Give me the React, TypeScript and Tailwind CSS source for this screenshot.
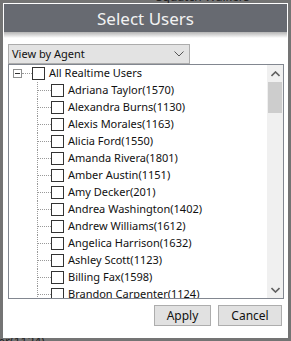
import React from "react";

const users: [string, number][] = [
  ["Adriana Taylor", 1570],
  ["Alexandra Burns", 1130],
  ["Alexis Morales", 1163],
  ["Alicia Ford", 1550],
  ["Amanda Rivera", 1801],
  ["Amber Austin", 1151],
  ["Amy Decker", 201],
  ["Andrea Washington", 1402],
  ["Andrew Williams", 1612],
  ["Angelica Harrison", 1632],
  ["Ashley Scott", 1123],
  ["Billing Fax", 1598],
  ["Brandon Carpenter", 1124],
];

const font = { fontFamily: '"Noto Sans", "Open Sans", sans-serif' };

function Box() {
  return <div className="w-[13px] h-[13px] shrink-0 border border-[#333333] bg-white" />;
}

export default function App() {
  return (
    <div className="relative w-[291px] h-[341px] overflow-hidden bg-[#747474]" style={font}>
      <div className="absolute left-[156px] top-[-10px] text-[12px] text-[#222] leading-[14px]">Squatch Walkers</div>
      <div className="absolute left-[-6px] top-[335px] text-[12px] text-[#222] leading-[14px]">ter(1124)</div>
      <div className="relative ml-[3px] mt-[3px] w-[285px] h-[335px] bg-white p-px flex flex-col">
        <div className="h-[28px] bg-[#676a71] flex items-center justify-center text-[17px] text-[#f2f2f2] leading-none pt-px">
          Select Users
        </div>
        <div className="h-[6px] bg-gradient-to-b from-[#b4b4b4] to-white" />
        <div className="pl-[4px] pt-[6px] flex flex-col">
          <div className="w-[182px] h-[20px] bg-[#e3e3e3] border border-[#acacac] flex items-center justify-between pl-[3px] pr-[5px] text-[11px] text-[#111]">
            <span>View by Agent</span>
            <svg width="10" height="6" viewBox="0 0 10 6">
              <path d="M0.5 0.5 L5 5 L9.5 0.5" fill="none" stroke="#555" strokeWidth="1" />
            </svg>
          </div>
          <div className="w-[276px] h-[235px] border border-[#828790] flex bg-white">
            <div className="flex-1 overflow-hidden text-[11px] text-[#111]">
              <div className="h-[17px] flex items-center">
                <div className="ml-[4px] w-[9px] h-[9px] border border-[#8e8f8f] flex items-center justify-center shrink-0">
                  <div className="w-[5px] h-px bg-[#333]" />
                </div>
                <div className="w-[10px] border-t border-dotted border-[#999]" />
                <Box />
                <span className="ml-[4px] whitespace-nowrap">All Realtime Users</span>
              </div>
              {users.map(([n, id]) => (
                <div key={n} className="h-[17px] flex items-stretch">
                  <div className="w-[28px] shrink-0" />
                  <div className="w-[14px] shrink-0 border-l border-dotted border-[#999] flex items-center">
                    <div className="w-full border-t border-dotted border-[#999]" />
                  </div>
                  <div className="flex items-center">
                    <Box />
                    <span className="ml-[4px] whitespace-nowrap">
                      {n}({id})
                    </span>
                  </div>
                </div>
              ))}
            </div>
            <div className="w-[16px] bg-[#f0f0f0] flex flex-col shrink-0">
              <div className="h-[17px] flex items-center justify-center">
                <svg width="9" height="6" viewBox="0 0 9 6">
                  <path d="M0.5 5 L4.5 1 L8.5 5" fill="none" stroke="#606060" strokeWidth="1.6" />
                </svg>
              </div>
              <div className="mx-px h-[31px] bg-[#cdcdcd]" />
              <div className="flex-1" />
              <div className="h-[17px] flex items-center justify-center">
                <svg width="9" height="6" viewBox="0 0 9 6">
                  <path d="M0.5 1 L4.5 5 L8.5 1" fill="none" stroke="#606060" strokeWidth="1.6" />
                </svg>
              </div>
            </div>
          </div>
          <div className="mt-[6px] flex justify-end gap-[7px] pr-[5px] text-[12px] text-[#111]">
            <button className="w-[57px] h-[21px] bg-[#e1e1e1] border border-[#adadad] flex items-center justify-center">
              Apply
            </button>
            <button className="w-[64px] h-[21px] bg-[#e1e1e1] border border-[#adadad] flex items-center justify-center">
              Cancel
            </button>
          </div>
        </div>
      </div>
    </div>
  );
}
